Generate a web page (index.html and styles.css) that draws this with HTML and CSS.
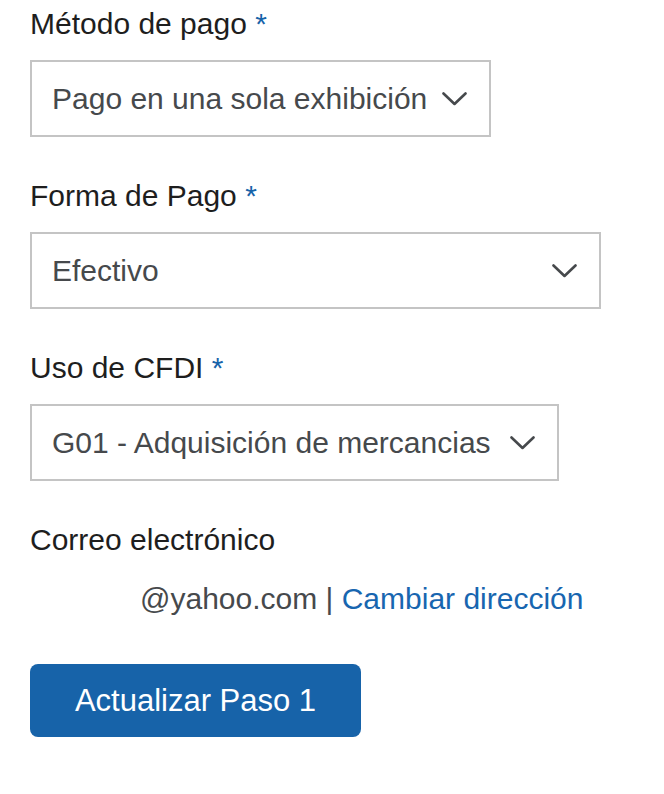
FILE: index.html
```html
<!DOCTYPE html>
<html>
	<head>
		<meta charset="utf-8" />
		<meta name="viewport" content="width=device-width, initial-scale=1" />
		<title>Paso 1</title>
		<link rel="stylesheet" href="styles.css">
	</head>
	<body>
		<form id="step1">
			<div class="field">
				<label class="label">Método de pago <span class="req">*</span></label>
				<div class="select select-metodo">
					<span class="value">Pago en una sola exhibición</span>
					<svg class="chevron" viewBox="0 0 25 14" width="25" height="14"><polyline points="1.5,1.5 12.5,12 23.5,1.5" /></svg>
				</div>
			</div>
			<div class="field">
				<label class="label">Forma de Pago <span class="req">*</span></label>
				<div class="select select-forma">
					<span class="value">Efectivo</span>
					<svg class="chevron" viewBox="0 0 25 14" width="25" height="14"><polyline points="1.5,1.5 12.5,12 23.5,1.5" /></svg>
				</div>
			</div>
			<div class="field">
				<label class="label">Uso de CFDI <span class="req">*</span></label>
				<div class="select select-uso">
					<span class="value">G01 - Adquisición de mercancias</span>
					<svg class="chevron" viewBox="0 0 25 14" width="25" height="14"><polyline points="1.5,1.5 12.5,12 23.5,1.5" /></svg>
				</div>
			</div>
			<div class="field field-email">
				<label class="label">Correo electrónico</label>
				<p class="email">@yahoo.com <span class="sep">|</span> <a href="#">Cambiar dirección</a></p>
			</div>
			<button type="button" class="button">Actualizar Paso 1</button>
		</form>
	</body>
</html>
```

FILE: styles.css
```css
body {
	margin: 0; padding: 0;
	background-color: #fff;
	font: 30px "Liberation Sans", Helvetica, Arial, sans-serif;
	color: #1e1e1e;
}
#step1 {
	padding: 7px 30px 40px 30px;
}
.field {
	margin-bottom: 42px;
}
.label {
	display: block;
	line-height: 34px;
	margin-bottom: 19px;
	color: #1e1e1e;
}
.req {
	color: #1763a9;
}
.select {
	display: flex; align-items: center; justify-content: space-between;
	box-sizing: border-box;
	height: 77px;
	padding: 0 22px 0 20px;
	border: 2px solid #c4c4c4;
	color: #46494c;
	background-color: #fff;
}
.select-metodo { width: 461px; }
.select-forma { width: 571px; }
.select-uso { width: 529px; }
.value {
	line-height: 34px;
	white-space: nowrap;
}
.chevron {
	flex: none;
	margin-left: 14px;
	fill: none;
	stroke: #46494c;
	stroke-width: 2.6;
	stroke-linecap: round;
	stroke-linejoin: round;
}
.field-email {
	margin-bottom: 48px;
}
.field-email .label {
	margin-bottom: 25px;
}
.email {
	margin: 0 0 0 110px;
	line-height: 34px;
	color: #46494c;
}
.sep {
	color: #46494c;
}
a:link, a:visited { text-decoration: none; color: #1866b0; }
.button {
	display: block;
	width: 331px; height: 73px;
	border: none;
	border-radius: 8px;
	background: #1763a9;
	color: #fff;
	font: 31px "Liberation Sans", Helvetica, Arial, sans-serif;
	cursor: pointer;
}
```
